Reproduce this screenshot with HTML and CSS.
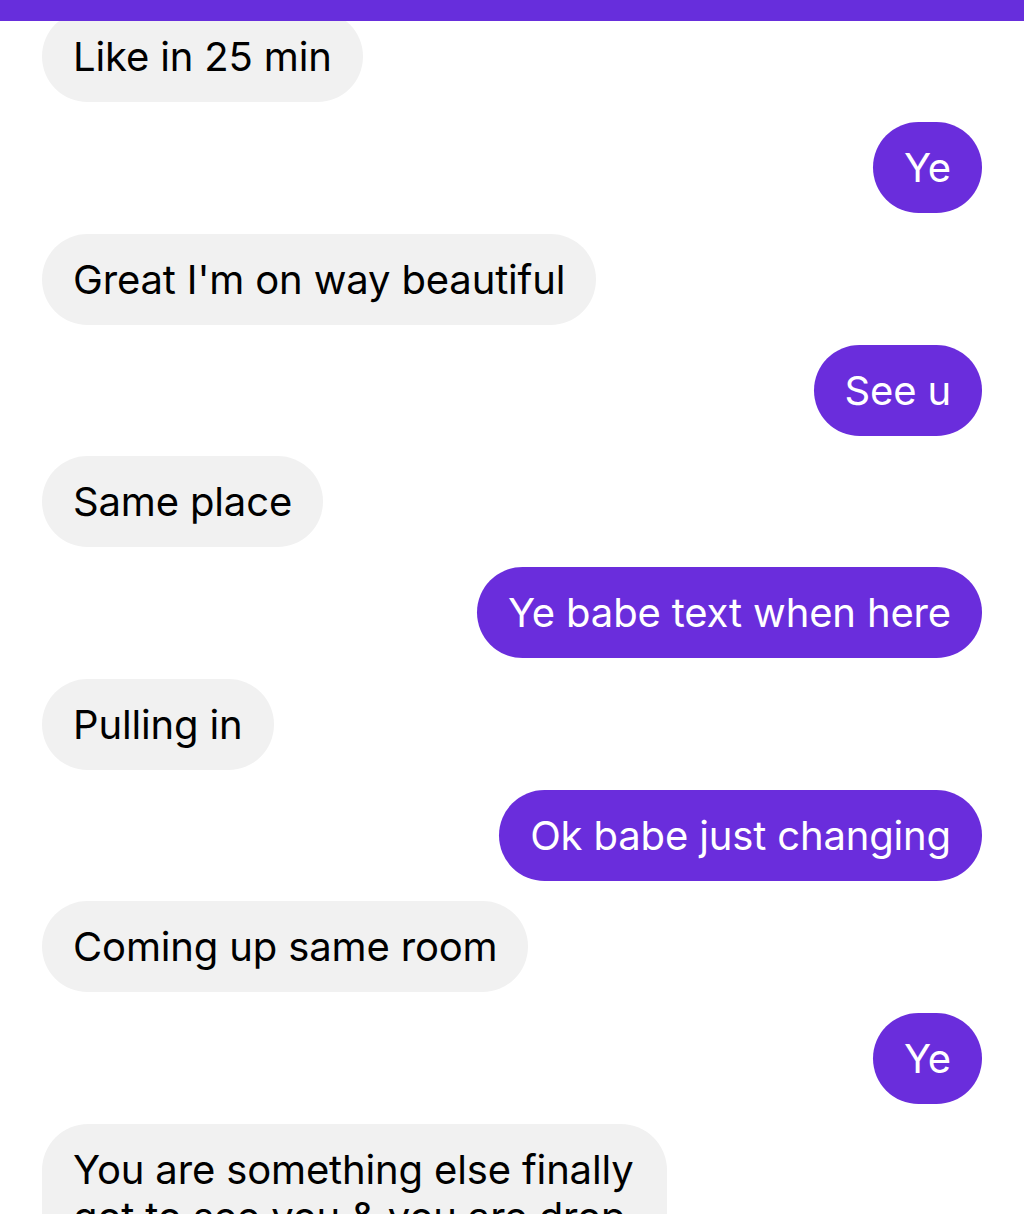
FILE: index.html
```html
<!DOCTYPE html>
<html lang="en">
<head>
<meta charset="UTF-8">
<meta name="viewport" content="width=device-width, initial-scale=1.0">
<title>Chat</title>
<link rel="stylesheet" href="styles.css">
</head>
<body>
<div class="topbar"></div>
<div class="thread">
  <div class="msg in">Like in 25 min</div>
  <div class="msg out">Ye</div>
  <div class="msg in">Great I'm on way beautiful</div>
  <div class="msg out">See u</div>
  <div class="msg in">Same place</div>
  <div class="msg out">Ye babe text when here</div>
  <div class="msg in">Pulling in</div>
  <div class="msg out">Ok babe just changing</div>
  <div class="msg in">Coming up same room</div>
  <div class="msg out">Ye</div>
  <div class="msg in">You are something else finally got to see you &amp; you are drop dead gorgeous</div>
</div>
</body>
</html>
```
FILE: styles.css
```css
html,body{margin:0;padding:0;background:#fff;}
body{font-family:Inter,"Noto Sans",sans-serif;overflow:hidden;height:1214px;}
.topbar{position:fixed;top:0;left:0;right:0;height:21px;background:#672edc;z-index:2;}
.thread{display:flex;flex-direction:column;gap:20.3px;padding:11px 42px 0;}
.msg{font-size:40px;line-height:47px;letter-spacing:-0.15px;padding:22px 31px;border-radius:46px;max-width:563px;}
.msg.in{align-self:flex-start;background:#f1f1f1;color:#000;}
.msg.out{align-self:flex-end;background:#6a2ddc;color:#fff;}
```
